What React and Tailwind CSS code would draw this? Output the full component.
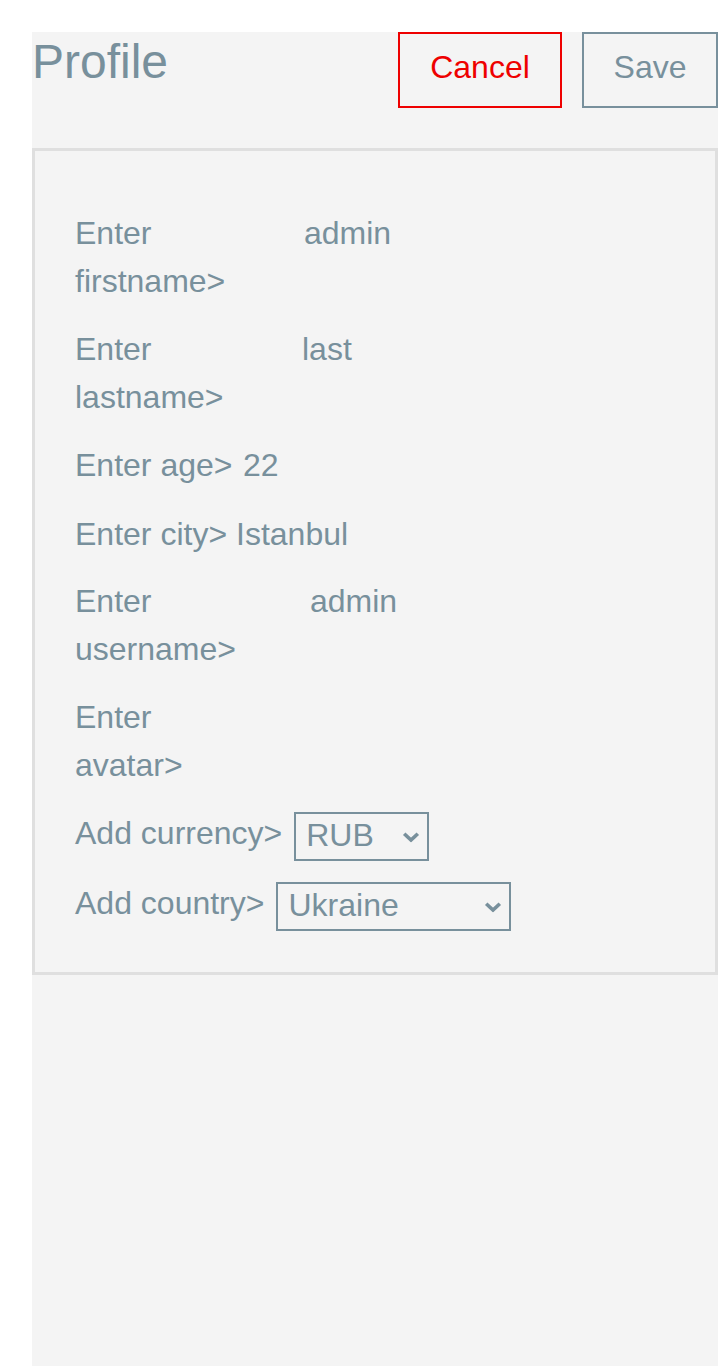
import React from "react";

const font = { fontFamily: '"Liberation Sans", Arial, sans-serif' };

function TextRow({ label, value, labelClass, rowClass }) {
  return (
    <div className={"flex items-start " + rowClass}>
      <label className={"shrink-0 " + labelClass}>{label}</label>
      <input
        readOnly
        defaultValue={value}
        className="min-w-0 flex-1 h-[48px] leading-[48px] bg-transparent text-[#78909c] outline-none border-0 p-0"
      />
    </div>
  );
}

function Chevron() {
  return (
    <svg
      width="18"
      height="11"
      viewBox="0 0 18 11"
      className="pointer-events-none absolute right-[9px] top-1/2 -translate-y-1/2"
    >
      <polyline
        points="2.2,2.2 9,8.6 15.8,2.2"
        fill="none"
        stroke="#78909c"
        strokeWidth="3.6"
        strokeLinecap="butt"
        strokeLinejoin="miter"
      />
    </svg>
  );
}

function Select({ value, options, widthClass }) {
  return (
    <div className={"relative mt-[3px] h-[49px] " + widthClass}>
      <select
        defaultValue={value}
        className="block h-[49px] w-full appearance-none border-2 border-[#78909c] bg-transparent text-[32px] leading-[37px] text-[#78909c] pl-[10px] pt-0 pb-[3px] outline-none"
      >
        {options.map((o) => (
          <option key={o}>{o}</option>
        ))}
      </select>
      <Chevron />
    </div>
  );
}

export default function App() {
  return (
    <div className="min-h-screen bg-white pl-8 pt-8" style={font}>
      <div className="min-h-[1334px] bg-[#f4f4f4] text-[#78909c]">
        <div className="flex items-start justify-between">
          <h1 className="text-[48px] leading-[59px] font-normal">Profile</h1>
          <div className="flex gap-[20px]">
            <button className="w-[164px] h-[76px] border-2 border-[#ee0000] text-[#ee0000] text-[32px] pb-[6px] flex items-center justify-center bg-transparent">
              Cancel
            </button>
            <button className="w-[136px] h-[76px] border-2 border-[#78909c] text-[#78909c] text-[32px] pb-[6px] flex items-center justify-center bg-transparent">
              Save
            </button>
          </div>
        </div>

        <div className="mt-[40px] border-[3px] border-[#dfdfdf] px-[40px] pt-[58px] pb-[41px] text-[32px] leading-[48px]">
          <TextRow label="Enter firstname>" value="admin" labelClass="w-[229px]" rowClass="" />
          <TextRow label="Enter lastname>" value="last" labelClass="w-[227px]" rowClass="mt-[20px]" />
          <TextRow label="Enter age>" value="22" labelClass="w-[168px]" rowClass="mt-[20px]" />
          <TextRow label="Enter city>" value="Istanbul" labelClass="w-[161px]" rowClass="mt-[21px]" />
          <TextRow label="Enter username>" value="admin" labelClass="w-[235px]" rowClass="mt-[19px]" />
          <TextRow label="Enter avatar>" value="" labelClass="w-[150px]" rowClass="mt-[20px]" />

          <div className="mt-[20px] flex items-start gap-[12px]">
            <label className="shrink-0">Add currency&gt;</label>
            <Select value="RUB" options={["RUB", "USD", "EUR"]} widthClass="w-[135px]" />
          </div>

          <div className="mt-[18px] flex items-start gap-[12px]">
            <label className="shrink-0">Add country&gt;</label>
            <Select value="Ukraine" options={["Ukraine", "Turkey", "Russia"]} widthClass="w-[235px]" />
          </div>
        </div>
      </div>
    </div>
  );
}
